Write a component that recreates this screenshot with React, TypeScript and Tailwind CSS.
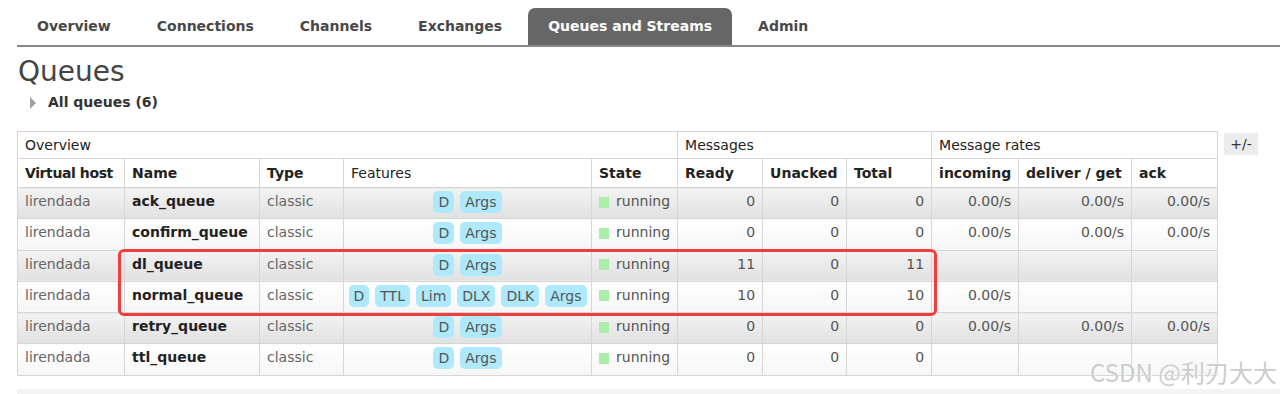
import React from 'react';

const TABS = ['Overview', 'Connections', 'Channels', 'Exchanges', 'Queues and Streams', 'Admin'];

type Queue = {
  name: string;
  features: string[];
  ready: string;
  unacked: string;
  total: string;
  rates: string[];
};

const QUEUES: Queue[] = [
  { name: 'ack_queue', features: ['D', 'Args'], ready: '0', unacked: '0', total: '0', rates: ['0.00/s', '0.00/s', '0.00/s'] },
  { name: 'confirm_queue', features: ['D', 'Args'], ready: '0', unacked: '0', total: '0', rates: ['0.00/s', '0.00/s', '0.00/s'] },
  { name: 'dl_queue', features: ['D', 'Args'], ready: '11', unacked: '0', total: '11', rates: ['', '', ''] },
  { name: 'normal_queue', features: ['D', 'TTL', 'Lim', 'DLX', 'DLK', 'Args'], ready: '10', unacked: '0', total: '10', rates: ['0.00/s', '', ''] },
  { name: 'retry_queue', features: ['D', 'Args'], ready: '0', unacked: '0', total: '0', rates: ['0.00/s', '0.00/s', '0.00/s'] },
  { name: 'ttl_queue', features: ['D', 'Args'], ready: '0', unacked: '0', total: '0', rates: ['', '', ''] },
];

const COLS = [107, 135, 84, 248, 86, 85, 84, 85, 87, 113, 86];

const th = 'border border-[#d6d6d6] px-[7px] text-left align-middle whitespace-nowrap text-[#222]';
const td = 'border border-[#d6d6d6] px-[7px] pt-[5px] align-top h-[31.3px] whitespace-nowrap';

export default function App() {
  return (
    <div className="relative h-[394px] w-[1280px] overflow-hidden bg-white font-['DejaVu_Sans',Verdana,sans-serif] text-[14px] leading-[17px]">
      {/* Tabs */}
      <nav className="ml-[17px] flex gap-[6px] border-b-2 border-[#888] pt-[8px]">
        {TABS.map((tab) => (
          <div
            key={tab}
            className={
              tab === 'Queues and Streams'
                ? 'flex h-[37px] items-center rounded-t-[7px] bg-[#666] px-5 font-bold text-white'
                : 'flex h-[37px] items-center px-5 font-bold text-[#484848]'
            }
          >
            {tab}
          </div>
        ))}
      </nav>

      <h1 className="ml-[18px] mt-[8px] text-[28px] font-normal leading-[34px] text-[#444]">Queues</h1>

      <div className="ml-[30px] mt-[5px] flex items-center gap-[12px]">
        <span className="h-0 w-0 border-y-[6px] border-l-[6px] border-y-transparent border-l-[#a0a0a0]" />
        <span className="font-bold text-[#333]">All queues (6)</span>
      </div>

      {/* Table */}
      <div className="ml-[17px] mt-[20px] flex items-start gap-[6px]">
        <table className="w-[1200px] table-fixed border-collapse">
          <colgroup>
            {COLS.map((w, i) => (
              <col key={i} style={{ width: w }} />
            ))}
          </colgroup>
          <thead>
            <tr className="h-[27px]">
              <th colSpan={5} className={`${th} font-normal`}>Overview</th>
              <th colSpan={3} className={`${th} font-normal`}>Messages</th>
              <th colSpan={3} className={`${th} font-normal`}>Message rates</th>
            </tr>
            <tr className="h-[29px]">
              <th className={`${th} font-bold tracking-[-0.4px]`}>Virtual host</th>
              <th className={`${th} font-bold`}>Name</th>
              <th className={`${th} font-bold`}>Type</th>
              <th className={`${th} font-normal`}>Features</th>
              <th className={`${th} font-bold`}>State</th>
              <th className={`${th} font-bold`}>Ready</th>
              <th className={`${th} font-bold`}>Unacked</th>
              <th className={`${th} font-bold`}>Total</th>
              <th className={`${th} font-bold`}>incoming</th>
              <th className={`${th} font-bold`}>deliver / get</th>
              <th className={`${th} font-bold`}>ack</th>
            </tr>
          </thead>
          <tbody>
            {QUEUES.map((q, i) => {
              const bg =
                i % 2 === 0
                  ? 'bg-linear-to-b from-[#f3f3f3] to-[#e1e1e1]'
                  : 'bg-linear-to-b from-white to-[#f6f6f6]';
              return (
                <tr key={q.name}>
                  <td className={`${td} ${bg} text-[#666]`}>lirendada</td>
                  <td className={`${td} ${bg} font-bold text-[#222]`}>{q.name}</td>
                  <td className={`${td} ${bg} text-[#666]`}>classic</td>
                  <td className={`${td} ${bg} !pt-[3px]`}>
                    <div className="flex justify-center gap-[6px]">
                      {q.features.map((f) => (
                        <span key={f} className="rounded-[5px] bg-[#aeeafc] px-[5px] py-[2px] leading-[18px] text-[#555]">
                          {f}
                        </span>
                      ))}
                    </div>
                  </td>
                  <td className={`${td} ${bg} text-[#555]`}>
                    <div className="flex items-center gap-[7px]">
                      <span className="mt-[1px] h-[11px] w-[11px] bg-[#aaeeaa]" />
                      running
                    </div>
                  </td>
                  <td className={`${td} ${bg} text-right text-[#555]`}>{q.ready}</td>
                  <td className={`${td} ${bg} text-right text-[#555]`}>{q.unacked}</td>
                  <td className={`${td} ${bg} text-right text-[#555]`}>{q.total}</td>
                  {q.rates.map((r, j) => (
                    <td key={j} className={`${td} ${bg} text-right text-[#555]`}>{r}</td>
                  ))}
                </tr>
              );
            })}
          </tbody>
        </table>
        <div className="mt-[2px] flex h-[22px] w-[34px] items-center justify-center bg-[#ececec] text-[#333]">+/-</div>
      </div>

      <div className="ml-[17px] mt-[13px] h-[8px] bg-[#f4f4f4]" />

      {/* annotation overlay */}
      <div className="pointer-events-none absolute left-[118px] top-[249px] h-[67px] w-[819px] rounded-[6px] border-[3px] border-[#f23d3d]" />

      {/* watermark */}
      <div className="pointer-events-none absolute right-[3px] top-[356px] font-['Noto_Sans_CJK_SC',sans-serif] text-[24px] leading-[32px] text-[#cccccc] [text-shadow:0_0_1px_#fff,1px_1px_1px_#fff]">
        CSDN @利刃大大
      </div>
    </div>
  );
}
